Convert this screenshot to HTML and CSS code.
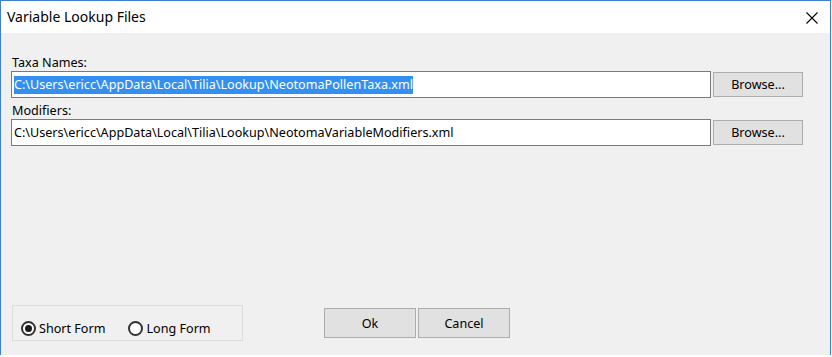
FILE: index.html
```html
<!DOCTYPE html>
<html>
<head>
  <meta charset="utf-8">
  <title>Variable Lookup Files</title>
  <link rel="stylesheet" href="styles.css">
</head>
<body>

  <div class="window">
    <div class="titlebar">
      <span class="title">Variable Lookup Files</span>
      <span class="close">
        <svg width="12" height="12" viewBox="0 0 12 12"><path d="M0.5 0.5 L11.5 11.5 M11.5 0.5 L0.5 11.5" stroke="#000" stroke-width="1.1" fill="none"/></svg>
      </span>
    </div>

    <div class="content">
      <div class="label">Taxa Names:</div>
      <div class="row">
        <div class="field"><span class="selected">C:\Users\ericc\AppData\Local\Tilia\Lookup\NeotomaPollenTaxa.xml</span></div>
        <button class="btn browse">Browse...</button>
      </div>

      <div class="label second">Modifiers:</div>
      <div class="row">
        <div class="field"><span>C:\Users\ericc\AppData\Local\Tilia\Lookup\NeotomaVariableModifiers.xml</span></div>
        <button class="btn browse">Browse...</button>
      </div>
    </div>

    <div class="footer">
      <div class="group">
        <label class="option"><span class="radio checked"></span>Short Form</label>
        <label class="option"><span class="radio"></span>Long Form</label>
      </div>
      <div class="buttons">
        <button class="btn big">Ok</button>
        <button class="btn big">Cancel</button>
      </div>
    </div>
  </div>

</body>
</html>
```

FILE: styles.css
```css
body {
  margin: 0;
  background: #ffffff;
  font-family: "Noto Sans", "Open Sans", sans-serif;
  font-size: 12.6px;
  color: #000;
}

.window {
  width: 831px;
  height: 355px;
  box-sizing: border-box;
  border: 1px solid #3f7fd2;
  border-bottom: none;
  background: #f0f0f0;
  display: flex;
  flex-direction: column;
}

.titlebar {
  height: 32px;
  background: #ffffff;
  display: flex;
  align-items: center;
  justify-content: space-between;
  padding: 0 12px 0 6px;
}

.title {
  font-size: 14px;
  margin-top: -1px;
}

.close {
  display: flex;
  margin-top: 1px;
}

.content {
  padding: 22px 0 0 10px;
}

.label {
  height: 16px;
  line-height: 16px;
  padding-left: 1px;
}

.label.second {
  margin-top: 5px;
}

.row {
  display: flex;
  align-items: center;
  gap: 2px;
}

.field {
  width: 700px;
  height: 27px;
  box-sizing: border-box;
  border: 1px solid #7a7a7a;
  background: #fff;
  display: flex;
  align-items: center;
  padding-left: 2px;
  white-space: nowrap;
  overflow: hidden;
}

.field span {
  line-height: 18px;
}

.selected {
  background: #3390f0;
  color: #fff;
}

.btn {
  font-family: inherit;
  font-size: 12.6px;
  color: #000;
  background: #e1e1e1;
  border: 1px solid #adadad;
  padding: 0;
}

.browse {
  width: 90px;
  height: 25px;
}

.footer {
  margin-top: auto;
  margin-bottom: 14px;
  display: flex;
  align-items: center;
  padding-left: 11px;
}

.group {
  width: 231px;
  height: 36px;
  box-sizing: border-box;
  border: 1px solid #dcdcdc;
  display: flex;
  align-items: flex-end;
  padding: 0 0 3px 8px;
  gap: 23px;
}

.option {
  display: flex;
  align-items: center;
}

.radio {
  width: 15px;
  height: 15px;
  box-sizing: border-box;
  border: 2px solid #333;
  border-radius: 50%;
  background: #fff;
  margin-right: 3px;
  display: flex;
  align-items: center;
  justify-content: center;
}

.radio.checked::after {
  content: "";
  width: 7px;
  height: 7px;
  border-radius: 50%;
  background: #1a1a1a;
}

.buttons {
  display: flex;
  gap: 2px;
  margin-left: 81px;
}

.big {
  width: 92px;
  height: 30px;
}
```
